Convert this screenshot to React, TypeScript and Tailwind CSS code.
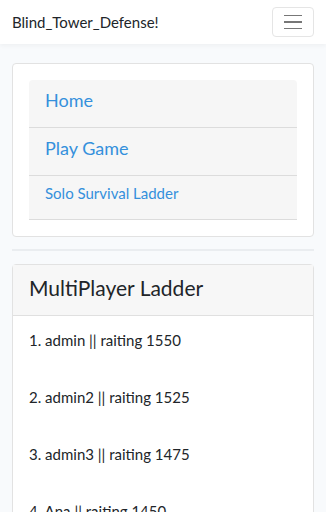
import React from 'react';

const font = { fontFamily: 'Lato, "Noto Sans", sans-serif' };

const ladder = [
    { name: 'admin', rating: 1550 },
    { name: 'admin2', rating: 1525 },
    { name: 'admin3', rating: 1475 },
    { name: 'Ana', rating: 1450 },
];

export default function App() {
    return (
        <div className="min-h-[512px] bg-[#f8fafc] text-[#212529]" style={font}>
            {/* navbar */}
            <nav className="h-[44px] bg-white shadow-[0_2px_4px_rgba(0,0,0,0.04)] flex items-center justify-between pl-3 pr-3">
                <span className="text-[15px] leading-none">Blind_Tower_Defense!</span>
                <button className="w-[42px] h-[30px] border border-[#e5e5e5] rounded flex flex-col items-center justify-center gap-[5px]">
                    <span className="block w-[18px] h-[1.5px] bg-[#777]" />
                    <span className="block w-[18px] h-[1.5px] bg-[#777]" />
                    <span className="block w-[18px] h-[1.5px] bg-[#777]" />
                </button>
            </nav>

            <main className="px-3 pt-[19px]">
                {/* menu card */}
                <div className="bg-white border border-[#e2e2e2] rounded p-4">
                    <ul className="bg-[#f6f6f6] rounded-t">
                        <li className="h-[48px] border-b border-[#dcdcdc] flex items-center pl-4 pb-[6px] text-[18px] text-[#3490dc]">Home</li>
                        <li className="h-[48px] border-b border-[#dcdcdc] flex items-center pl-4 pb-[6px] text-[18px] text-[#3490dc]">Play Game</li>
                        <li className="h-[44px] border-b border-[#dcdcdc] flex items-center pl-4 pb-[9px] text-[15px] text-[#3490dc]">Solo Survival Ladder</li>
                    </ul>
                </div>

                <hr className="mt-[12px] mb-[13px] border-0 h-[2px] bg-[#eaedf0]" />

                {/* ladder card */}
                <div className="bg-white border border-[#e2e2e2] rounded-t">
                    <div className="h-[51px] bg-[#f7f7f7] border-b border-[#e0e0e0] flex items-center pl-4 pb-[5px] text-[21px]">MultiPlayer Ladder</div>
                    <div className="pl-4 pt-[13px]">
                        {ladder.map((p, i) => (
                            <div key={p.name} className="h-[57px] text-[15px] leading-[23px]">
                                {i + 1}. {p.name} || raiting {p.rating}
                            </div>
                        ))}
                    </div>
                </div>
            </main>
        </div>
    );
}
